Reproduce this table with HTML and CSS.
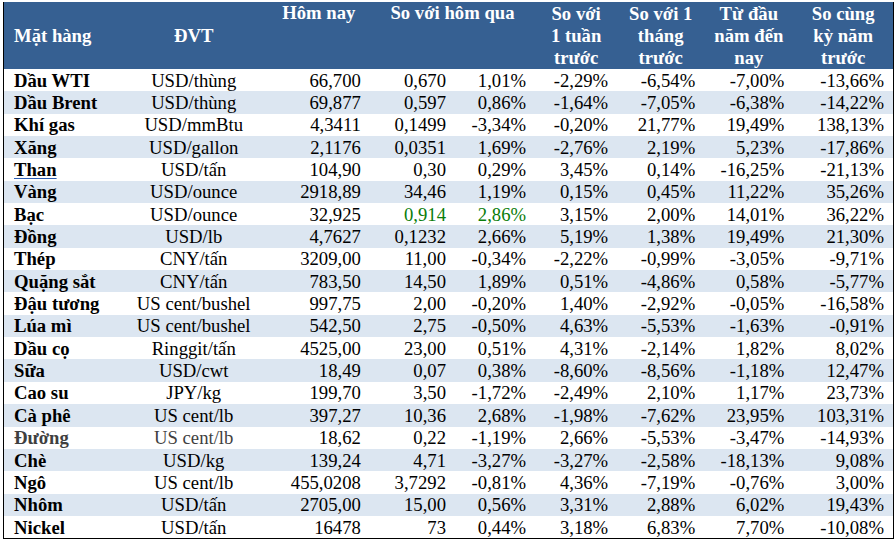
FILE: index.html
```html
<!DOCTYPE html>
<html lang="vi">
<head>
<meta charset="utf-8">
<title>Giá hàng hóa</title>
<link rel="stylesheet" href="styles.css">
</head>
<body>
<div class="sheet">
<table class="prices">
<colgroup>
<col class="c-name"><col class="c-unit"><col class="c-today"><col class="c-abs"><col class="c-pct"><col class="c-week"><col class="c-month"><col class="c-ytd"><col class="c-yoy">
</colgroup>
<thead>
<tr>
<th class="name">Mặt hàng</th>
<th>ĐVT</th>
<th class="top">Hôm nay</th>
<th class="top" colspan="2">So với hôm qua</th>
<th>So với<br>1 tuần<br>trước</th>
<th>So với 1<br>tháng<br>trước</th>
<th>Từ đầu<br>năm đến<br>nay</th>
<th>So cùng<br>kỳ năm<br>trước</th>
</tr>
</thead>
<tbody>
<tr><td class="name">Dầu WTI</td><td class="unit">USD/thùng</td><td>66,700</td><td>0,670</td><td>1,01%</td><td>-2,29%</td><td>-6,54%</td><td>-7,00%</td><td>-13,66%</td></tr>
<tr><td class="name">Dầu Brent</td><td class="unit">USD/thùng</td><td>69,877</td><td>0,597</td><td>0,86%</td><td>-1,64%</td><td>-7,05%</td><td>-6,38%</td><td>-14,22%</td></tr>
<tr><td class="name">Khí gas</td><td class="unit">USD/mmBtu</td><td>4,3411</td><td>0,1499</td><td>-3,34%</td><td>-0,20%</td><td>21,77%</td><td>19,49%</td><td>138,13%</td></tr>
<tr><td class="name">Xăng</td><td class="unit">USD/gallon</td><td>2,1176</td><td>0,0351</td><td>1,69%</td><td>-2,76%</td><td>2,19%</td><td>5,23%</td><td>-17,86%</td></tr>
<tr><td class="name"><span class="link">Than</span></td><td class="unit">USD/tấn</td><td>104,90</td><td>0,30</td><td>0,29%</td><td>3,45%</td><td>0,14%</td><td>-16,25%</td><td>-21,13%</td></tr>
<tr><td class="name">Vàng</td><td class="unit">USD/ounce</td><td>2918,89</td><td>34,46</td><td>1,19%</td><td>0,15%</td><td>0,45%</td><td>11,22%</td><td>35,26%</td></tr>
<tr><td class="name">Bạc</td><td class="unit">USD/ounce</td><td>32,925</td><td class="up">0,914</td><td class="up">2,86%</td><td>3,15%</td><td>2,00%</td><td>14,01%</td><td>36,22%</td></tr>
<tr><td class="name">Đồng</td><td class="unit">USD/lb</td><td>4,7627</td><td>0,1232</td><td>2,66%</td><td>5,19%</td><td>1,38%</td><td>19,49%</td><td>21,30%</td></tr>
<tr><td class="name">Thép</td><td class="unit">CNY/tấn</td><td>3209,00</td><td>11,00</td><td>-0,34%</td><td>-2,22%</td><td>-0,99%</td><td>-3,05%</td><td>-9,71%</td></tr>
<tr><td class="name">Quặng sắt</td><td class="unit">CNY/tấn</td><td>783,50</td><td>14,50</td><td>1,89%</td><td>0,51%</td><td>-4,86%</td><td>0,58%</td><td>-5,77%</td></tr>
<tr><td class="name">Đậu tương</td><td class="unit">US cent/bushel</td><td>997,75</td><td>2,00</td><td>-0,20%</td><td>1,40%</td><td>-2,92%</td><td>-0,05%</td><td>-16,58%</td></tr>
<tr><td class="name">Lúa mì</td><td class="unit">US cent/bushel</td><td>542,50</td><td>2,75</td><td>-0,50%</td><td>4,63%</td><td>-5,53%</td><td>-1,63%</td><td>-0,91%</td></tr>
<tr><td class="name">Dầu cọ</td><td class="unit">Ringgit/tấn</td><td>4525,00</td><td>23,00</td><td>0,51%</td><td>4,31%</td><td>-2,14%</td><td>1,82%</td><td>8,02%</td></tr>
<tr><td class="name">Sữa</td><td class="unit">USD/cwt</td><td>18,49</td><td>0,07</td><td>0,38%</td><td>-8,60%</td><td>-8,56%</td><td>-1,18%</td><td>12,47%</td></tr>
<tr><td class="name">Cao su</td><td class="unit">JPY/kg</td><td>199,70</td><td>3,50</td><td>-1,72%</td><td>-2,49%</td><td>2,10%</td><td>1,17%</td><td>23,73%</td></tr>
<tr><td class="name">Cà phê</td><td class="unit">US cent/lb</td><td>397,27</td><td>10,36</td><td>2,68%</td><td>-1,98%</td><td>-7,62%</td><td>23,95%</td><td>103,31%</td></tr>
<tr><td class="name muted">Đường</td><td class="unit muted">US cent/lb</td><td>18,62</td><td>0,22</td><td>-1,19%</td><td>2,66%</td><td>-5,53%</td><td>-3,47%</td><td>-14,93%</td></tr>
<tr><td class="name">Chè</td><td class="unit">USD/kg</td><td>139,24</td><td>4,71</td><td>-3,27%</td><td>-3,27%</td><td>-2,58%</td><td>-18,13%</td><td>9,08%</td></tr>
<tr><td class="name">Ngô</td><td class="unit">US cent/lb</td><td>455,0208</td><td>3,7292</td><td>-0,81%</td><td>4,36%</td><td>-7,19%</td><td>-0,76%</td><td>3,00%</td></tr>
<tr><td class="name">Nhôm</td><td class="unit">USD/tấn</td><td>2705,00</td><td>15,00</td><td>0,56%</td><td>3,31%</td><td>2,88%</td><td>6,02%</td><td>19,43%</td></tr>
<tr><td class="name">Nickel</td><td class="unit">USD/tấn</td><td>16478</td><td>73</td><td>0,44%</td><td>3,18%</td><td>6,83%</td><td>7,70%</td><td>-10,08%</td></tr>
</tbody>
</table>
</div>
</body>
</html>
```
FILE: styles.css
```css
html, body {
  margin: 0;
  padding: 0;
  background: #ffffff;
}

.sheet {
  padding: 2px 0 0 3px;
}

.prices {
  border-collapse: collapse;
  table-layout: fixed;
  width: 891px;
  font-family: "Liberation Serif", "Times New Roman", serif;
  font-size: 18.7px;
  color: #000000;
  border-left: 1px solid #000000;
  border-right: 1px solid #000000;
  border-bottom: 1px solid #000000;
}

.c-name { width: 116px; }
.c-unit { width: 148px; }
.c-today { width: 102px; }
.c-abs { width: 85px; }
.c-pct { width: 80px; }
.c-week { width: 82px; }
.c-month { width: 87px; }
.c-ytd { width: 89px; }
.c-yoy { width: 100px; }

.prices thead th {
  background: #366092;
  color: #ffffff;
  font-weight: bold;
  height: 67px;
  padding: 0;
  line-height: 22px;
  text-align: center;
  vertical-align: middle;
  white-space: nowrap;
}

.prices thead th.top {
  vertical-align: top;
}

.prices thead th.name {
  text-align: left;
  padding-left: 10px;
}

.prices td {
  height: 22.35px;
  padding: 0 9px 0 0;
  line-height: 21px;
  text-align: right;
  vertical-align: middle;
  white-space: nowrap;
}

.prices tbody tr:nth-child(even) td {
  background: #dce6f1;
}

.prices td.name {
  text-align: left;
  font-weight: bold;
  padding: 0 0 0 10px;
}

.prices td.unit {
  text-align: center;
  padding: 0;
}

.prices td.muted {
  color: #3f3f3f;
}

.prices td.up {
  color: #0a7d0a;
}

.link {
  text-decoration: underline;
  text-decoration-color: #2f5fb3;
  text-underline-offset: 2px;
}
```
